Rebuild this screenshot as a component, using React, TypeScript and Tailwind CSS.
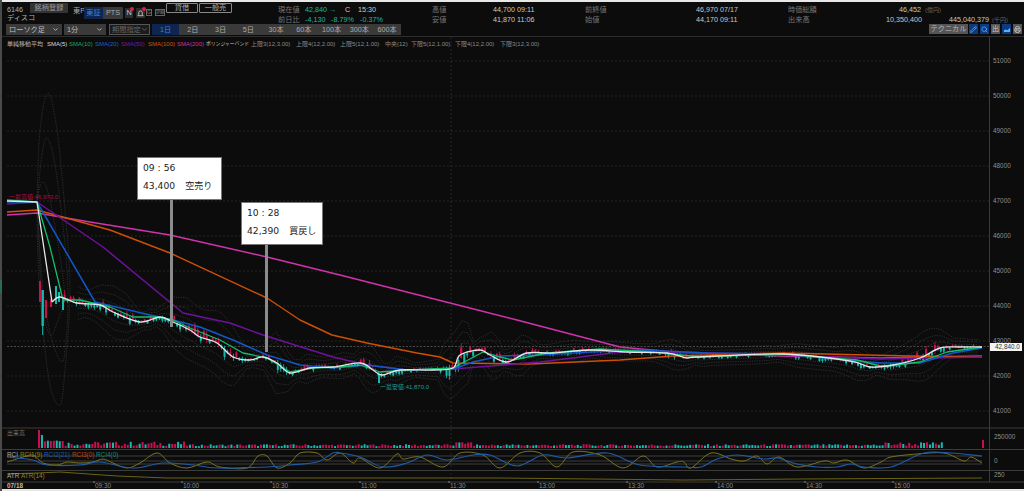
import React from "react";
import { Pencil, Search, Printer, ChevronDown } from "lucide-react";

type P = [number, number];
const white: P[] = [[7,201],[37,202],[52,302],[60,297],[77,303],[100,305],[113,312],[140,322],[160,317],[173,322],[190,330],[200,337],[217,343],[233,357],[250,360],[263,357],[277,363],[290,373],[310,368],[333,367],[360,363],[373,370],[382,375],[400,370],[433,370],[453,368],[460,355],[480,350],[490,355],[507,362],[527,353],[553,353],[590,350],[627,352],[667,353],[687,358],[697,357],[783,354],[850,361],[870,367],[893,365],[920,358],[940,348],[960,347],[982,347]];
const green: P[] = [[7,200],[37,202],[50,247],[63,300],[80,300],[110,307],[133,317],[157,317],[173,320],[190,328],[220,340],[243,353],[267,358],[290,372],[313,368],[340,367],[360,365],[380,372],[407,370],[453,368],[483,352],[500,357],[513,360],[547,353],[600,349],[653,352],[700,357],[783,354],[857,360],[880,366],[897,365],[920,362],[947,352],[982,347]];
const blue: P[] = [[7,202],[37,202],[95,302],[150,315],[173,320],[200,327],[233,340],[267,355],[300,365],[333,368],[367,365],[407,370],[453,369],[473,362],[500,356],[540,355],[590,352],[640,350],[707,353],[783,354],[880,363],[920,363],[953,353],[982,348]];
const purple: P[] = [[7,204],[37,202],[103,247],[183,313],[230,323],[263,335],[333,357],[367,365],[407,370],[453,369],[540,362],[620,352],[707,353],[783,355],[880,359],[982,357]];
const orange: P[] = [[7,212],[37,210],[110,230],[170,253],[267,298],[300,320],[332,335],[367,343],[417,353],[440,357],[453,363],[530,364],[620,360],[673,356],[783,353],[910,356],[982,357]];
const magenta: P[] = [[7,215],[37,213],[90,222],[170,235],[267,257],[340,275],[450,303],[517,320],[620,347],[673,352],[783,356],[880,358],[982,356]];
const rciA: P[] = [[7,462],[20,458],[33,455],[43,463],[57,465],[67,462],[80,463],[93,462],[103,459],[113,463],[127,468],[140,463],[157,453],[170,463],[187,468],[207,462],[220,467],[247,468],[258,456],[267,456],[277,468],[290,463],[300,453],[317,453],[327,460],[340,453],[353,463],[360,458],[380,468],[397,454],[403,459],[420,457],[443,467],[460,453],[483,455],[500,468],[520,453],[540,453],[557,467],[573,452],[600,455],[623,468],[643,456],[657,467],[677,462],[684,462],[691,468],[711,453],[731,459],[744,461],[757,456],[767,464],[779,457],[797,467],[824,461],[834,463],[847,460],[864,468],[881,462],[891,457],[917,454],[944,453],[964,461],[971,457],[982,463]];
const rciB: P[] = [[7,457],[33,460],[47,465],[80,465],[100,462],[133,468],[163,463],[193,465],[217,468],[267,467],[290,465],[317,462],[333,453],[340,453],[360,457],[383,467],[407,463],[427,455],[447,460],[473,455],[490,455],[517,466],[543,455],[567,458],[607,453],[640,465],[684,467],[701,467],[717,459],[737,455],[764,459],[777,458],[797,464],[817,467],[837,467],[851,464],[864,467],[891,467],[924,453],[951,453],[982,456]];
const atr: P[] = [[7,474],[37,473],[60,472],[117,476],[167,478],[340,478],[500,478],[683,480],[800,479],[982,478]];

const pts = (a: P[]) => a.map((p) => p.join(",")).join(" ");
const smooth = (a: P[]) => {
  let d = `M${a[0][0]} ${a[0][1]}`;
  for (let i = 0; i < a.length - 1; i++) {
    const p0 = a[Math.max(i - 1, 0)];
    const p1 = a[i];
    const p2 = a[i + 1];
    const p3 = a[Math.min(i + 2, a.length - 1)];
    d += ` C${p1[0] + (p2[0] - p0[0]) / 6} ${p1[1] + (p2[1] - p0[1]) / 6} ${p2[0] - (p3[0] - p1[0]) / 6} ${p2[1] - (p3[1] - p1[1]) / 6} ${p2[0]} ${p2[1]}`;
  }
  return d;
};
const at = (a: P[], x: number) => {
  for (let i = 1; i < a.length; i++) {
    if (x <= a[i][0]) {
      const [x0, y0] = a[i - 1];
      const [x1, y1] = a[i];
      return y0 + ((y1 - y0) * (x - x0)) / (x1 - x0);
    }
  }
  return a[a.length - 1][1];
};
const rnd = (i: number) => {
  const v = Math.sin(i * 12.9898) * 43758.5453;
  return v - Math.floor(v);
};
const UP = "#c8104e";
const DOWN = "#18b8b0";
const vol = (x: number) => Math.abs(at(white, x - 14) - at(white, x + 14));

const candles = Array.from({ length: 318 }, (_, i) => {
  const x = 40 + i * 2.96;
  const y = at(white, x);
  const v = vol(x);
  const h = 1 + rnd(i) * (1 + v * 0.45);
  const up = rnd(i + 500) > 0.5;
  return { x, y: up ? y - h : y, h, up, wick: 0.4 + rnd(i + 900) * (0.8 + v * 0.2) };
}).filter((c) => c.x > 62);

const bars = Array.from({ length: 306 }, (_, i) => {
  const x = 38 + i * 2.96;
  let h = 1.8 + rnd(i + 70) * 2;
  if (i === 0) h = 18;
  else if (i === 1) h = 13;
  else if (i < 9) h = 6.5 + rnd(i) * 1.5;
  else if (i < 50) h = 2 + rnd(i + 70) * 4.5;
  else if (i > 140 && i < 147) h = 4 + rnd(i) * 2;
  else if (i > 285) h = 2 + rnd(i + 70) * 4;
  return { x, h, up: rnd(i + 300) > 0.5 || i === 0 };
});

const band = (k: number) => {
  const a: string[] = [];
  const b: string[] = [];
  for (let x = 78; x <= 982; x += 6) {
    const d = k * (1 + Math.min(vol(x), 22) * 0.2);
    a.push(`${x},${at(white, x) - d}`);
    b.push(`${x},${at(white, x) + d}`);
  }
  return [a.join(" "), b.join(" ")];
};

const prices = [51000, 50000, 49000, 48000, 47000, 46000, 45000, 44000, 43000, 42000, 41000];
const times: [number, string][] = [[94,"09:30"],[182,"10:00"],[271,"10:30"],[360,"11:00"],[449,"11:30"],[538,"13:00"],[627,"13:30"],[716,"14:00"],[805,"14:30"],[893,"15:00"]];
const ranges = ["2日", "3日", "5日", "30本", "60本", "100本", "300本", "600本"];
const legend: [string, string][] = [
  ["単純移動平均", "w-[40px] text-[#b8b8b8]"],
  ["SMA(5)", "w-[22px] text-[#d8d8d8]"],
  ["SMA(10)", "w-[26px] text-[#10b060]"],
  ["SMA(20)", "w-[26px] text-[#1860d0]"],
  ["SMA(50)", "w-[27px] text-[#7818a8]"],
  ["SMA(100)", "w-[29px] text-[#d05010]"],
  ["SMA(200)", "w-[29px] text-[#c830a0]"],
  ["ボリンジャーバンド", "w-[45px] text-[4.8px] text-[#c8c8c8]"],
  ["上限3(12,3.00)", "w-[45px] text-[#8a8a8a]"],
  ["上限4(12,2.00)", "w-[44px] text-[#8a8a8a]"],
  ["上限5(12,1.00)", "w-[45px] text-[#8a8a8a]"],
  ["中央(12)", "w-[26px] text-[#8a8a8a]"],
  ["下限5(12,1.00)", "w-[44px] text-[#8a8a8a]"],
  ["下限4(12,2.00)", "w-[45px] text-[#8a8a8a]"],
  ["下限3(12,3.00)", "text-[#8a8a8a]"],
];

function Stat({ label, value, time, w, vw }: { label: string; value: string; time?: string; w: string; vw: string }) {
  return (
    <div className={`flex items-center ${w}`}>
      <span className="w-[61px] text-[#777]">{label}</span>
      <span className={`text-right text-[#c8c8c8] ${vw}`}>{value}</span>
      {time && <span className="ml-[2px] text-[#c8c8c8]">{time}</span>}
    </div>
  );
}

function Tag({ time, value, side, box, pole }: { time: string; value: string; side: string; box: string; pole: string }) {
  return (
    <>
      <div className={`absolute flex flex-col justify-center gap-[6px] border border-[#777] bg-white pb-[4px] pl-[5px] font-['DejaVu_Sans','Noto_Sans_CJK_JP',sans-serif] text-[9.2px] leading-[12px] text-[#222] ${box}`}>
        <span>{time}</span>
        <span>
          {value}
          <span className="ml-[10px] text-[9px]">{side}</span>
        </span>
      </div>
      <div className={`absolute w-[3px] bg-[#8c8c8c] ${pole}`} />
    </>
  );
}

export default function App() {
  const [b1u, b1d] = band(2.5);
  const [b2u, b2d] = band(5);
  const [b3u, b3d] = band(7.5);
  return (
    <div className="flex h-[491px] w-[1024px] overflow-hidden whitespace-nowrap bg-[#e8e8e8] font-['Liberation_Sans','Noto_Sans_CJK_JP',sans-serif] text-[7.2px] leading-none">
      <div className="h-full w-[2px] shrink-0 bg-[#4a4a4a] pt-[280px]">
        <div className="h-[13px] w-[2px] bg-[#2a6a58]" />
      </div>
      <div className="mt-[2px] flex h-[487px] w-[1022px] flex-col bg-[#0c0c0c]">
        <div className="flex h-[22px] shrink-0 pl-[5px] pt-[1px]">
          <div className="flex w-[271px] shrink-0">
            <div className="flex h-[21px] w-[23px] shrink-0 flex-col justify-between py-[3px] text-[#b0b0b0]">
              <span>6146</span>
              <span>ディスコ</span>
            </div>
            <div className="flex h-[10px] w-[38px] shrink-0 items-center justify-center rounded-[1px] bg-[#333] text-[#999]">銘柄登録</div>
            <span className="ml-[5px] mt-[4px] w-[11px] shrink-0 text-[#aaa]">東P</span>
            <div className="mt-[4px] flex h-[12px] w-[39px] shrink-0 overflow-hidden rounded-[1px] bg-[#3a3a3a]">
              <span className="flex w-[19px] items-center justify-center bg-[#0d2550] text-[#3a80d8]">東証</span>
              <span className="flex flex-1 items-center justify-center text-[#aaa]">PTS</span>
            </div>
            <div className="relative ml-[2px] mt-[5px] flex h-[10px] w-[8px] shrink-0 items-center justify-center bg-[#2c2c2c] text-[#ccc]">
              N<span className="absolute -right-[1px] -top-[1px] h-[4px] w-[4px] rounded-full bg-[#e02040]" />
            </div>
            <div className="relative ml-[3px] mt-[5px] flex h-[10px] w-[9px] shrink-0 items-center justify-center bg-[#2c2c2c] text-[#ccc]">
              <svg viewBox="0 0 8 8" className="h-[7px] w-[7px]" fill="none" stroke="#ccc" strokeWidth="1"><path d="M1 6.5h6L6 5V3a2 2 0 0 0-4 0v2z" /></svg>
              <span className="absolute -right-[1px] -top-[1px] h-[4px] w-[4px] rounded-full bg-[#e02040]" />
            </div>
            <span className="ml-[1px] mt-[6px] flex h-[7px] w-[6px] shrink-0 items-center justify-center border border-[#666] text-[5px] text-[#888]">G</span>
            <span className="ml-[3px] mt-[6px] flex h-[7px] w-[10px] shrink-0 items-center justify-center border border-[#666] text-[4px] text-[#888]">詳細</span>
            <span className="ml-[1px] flex h-[10px] w-[32px] shrink-0 items-center justify-center rounded-[1px] border border-[#888] text-[#aaa]">貸借</span>
            <span className="ml-[1px] flex h-[10px] w-[33px] shrink-0 items-center justify-center rounded-[1px] border border-[#888] text-[#aaa]">一般売</span>
          </div>
          <div className="flex flex-1 flex-col gap-[2px] pt-[3px]">
            <div className="flex h-[8px] items-center">
              <div className="flex w-[154px] items-center">
                <span className="w-[27px] text-[#777]">現在値</span>
                <span className="w-[40px] text-[#1cb8a8]">42,840 →</span>
                <span className="w-[13px] text-[#ccc]">C</span>
                <span className="text-[#ccc]">15:30</span>
              </div>
              <Stat label="高値" value="44,700" time="09:11" w="w-[153px]" vw="w-[22px]" />
              <Stat label="前終値" value="46,970" time="07/17" w="w-[203px]" vw="w-[72px]" />
              <div className="flex items-center">
                <span className="w-[111px] text-[#777]">時価総額</span>
                <span className="w-[22px] text-right text-[#c8c8c8]">46,452</span>
                <span className="ml-[4px] text-[6px] text-[#666]">(億円)</span>
              </div>
            </div>
            <div className="flex h-[8px] items-center">
              <div className="flex w-[154px] items-center">
                <span className="w-[27px] text-[#777]">前日比</span>
                <span className="w-[26px] text-[#1cb8a8]">-4,130</span>
                <span className="w-[29px] text-[#1cb8a8]">-8.79%</span>
                <span className="text-[#1cb8a8]">-0.37%</span>
              </div>
              <Stat label="安値" value="41,870" time="11:06" w="w-[153px]" vw="w-[22px]" />
              <Stat label="始値" value="44,170" time="09:11" w="w-[203px]" vw="w-[72px]" />
              <div className="flex items-center">
                <span className="w-[98px] text-[#777]">出来高</span>
                <span className="w-[36px] text-right text-[#c8c8c8]">10,350,400</span>
                <span className="ml-[27px] text-[#c8c8c8]">445,040,379</span>
                <span className="ml-[3px] text-[6px] text-[#666]">(千円)</span>
              </div>
            </div>
          </div>
        </div>
        <div className="flex h-[13px] shrink-0 items-start border-b border-[#2e2e2e] pl-[4px]">
          <div className="flex h-[11px] w-[56px] items-center justify-between bg-[#3a3a3a] px-[3px] text-[#bbb]">ローソク足<ChevronDown size={7} strokeWidth={3} className="shrink-0" /></div>
          <div className="ml-[2px] flex h-[11px] w-[42px] items-center justify-between bg-[#3a3a3a] px-[3px] text-[#bbb]">1分<ChevronDown size={7} strokeWidth={3} className="shrink-0" /></div>
          <div className="ml-[3px] flex h-[11px] w-[41px] items-center justify-between border border-[#555] bg-[#1c1c1c] px-[2px] text-[#666]">期間指定<ChevronDown size={7} strokeWidth={3} className="shrink-0" /></div>
          <div className="ml-[2px] flex h-[11px] w-[249px] bg-[#3a3a3a] text-[#aaa]">
            <span className="flex w-[27px] items-center justify-center bg-[#0d2550] text-[#3a80d8]">1日</span>
            {ranges.map((r) => (
              <span key={r} className="flex flex-1 items-center justify-center">{r}</span>
            ))}
          </div>
          <div className="ml-auto mr-[2px] flex h-[10px] items-center gap-[2px]">
            <span className="mr-[-1px] flex h-[10px] w-[39px] items-center justify-center bg-[#555] text-[#bbb]">テクニカル</span>
            <span className="flex h-[10px] w-[9px] items-center justify-center bg-[#0c3a80] text-[#5ab0ff]"><Pencil size={7} strokeWidth={2.5} /></span>
            <span className="flex h-[10px] w-[9px] items-center justify-center bg-[#0c3a80] text-[#5ab0ff]"><Search size={7} strokeWidth={2.5} /></span>
            <span className="flex h-[10px] w-[9px] items-center justify-center bg-[#555] text-[#ccc]">出</span>
            <span className="flex h-[10px] w-[9px] items-center justify-center bg-[#0c3a80]">
              <svg viewBox="0 0 9 9" className="h-[8px] w-[8px]"><path d="M1 8V6l2-1 2 1 3-3v5z" fill="#5ab0ff" /></svg>
            </span>
            <span className="flex h-[10px] w-[9px] items-center justify-center bg-[#555] text-[#ccc]"><Printer size={7} strokeWidth={2.5} /></span>
          </div>
        </div>
        <div className="relative min-h-0 flex-1">
          <div className="absolute left-[5px] top-[3px] flex items-center text-[6px] leading-[8px]">
            {legend.map(([t, c]) => (
              <span key={t} className={`shrink-0 ${c}`}>{t}</span>
            ))}
          </div>
          <svg viewBox="2 37 1022 452" className="block h-[452px] w-[1022px]" fontSize="6.4">
            {prices.map((p, i) => (
              <line key={p} x1="7" x2="989" y1={61 + i * 35} y2={61 + i * 35} stroke="#2b2b2b" strokeWidth="0.8" strokeDasharray="2 2" />
            ))}
            <line x1="451" x2="451" y1="37" y2="482" stroke="#2b2b2b" strokeWidth="0.8" strokeDasharray="2 2" />
            <line x1="7" x2="989" y1="346.5" y2="346.5" stroke="#5a5a5a" strokeWidth="0.8" strokeDasharray="2 1.5" />
            <line x1="989.5" x2="989.5" y1="37" y2="482" stroke="#3a3a3a" />
            {[428, 449.5, 470.5, 482].map((y) => (
              <line key={y} x1="2" x2="1024" y1={y} y2={y} stroke="#3c3c3c" />
            ))}
            {[456, 461, 464].map((y) => (
              <line key={y} x1="7" x2="982" y1={y} y2={y} stroke="#4a4a4a" strokeWidth="0.8" />
            ))}

            <g fill="none" stroke="#363636" strokeWidth="0.8" strokeDasharray="1.2 1.2">
              <path d={smooth([[37,202],[40,130],[48,93],[57,130],[65,210],[70,290],[65,370],[60,405],[50,385],[42,320],[38,260],[37,202]])} />
              <path d={smooth([[37,202],[42,155],[47,138],[55,165],[65,245],[68,300],[66,340],[62,362],[52,340],[43,290],[37,202]])} />
              <path d={smooth([[37,202],[42,182],[50,200],[62,270],[64,300],[58,320],[50,335],[42,300],[37,202]])} />
              {[b1u, b1d, b2u, b2d, b3u, b3d].map((b, i) => (
                <polyline key={i} points={b} />
              ))}
            </g>

            {candles.map((c, i) => (
              <g key={i} fill={c.up ? UP : DOWN}>
                <rect x={c.x + 0.6} y={c.y - c.wick} width="0.8" height={c.h + c.wick * 2} />
                <rect x={c.x} y={c.y} width="2" height={c.h} />
              </g>
            ))}
            <g>
              <rect x="39" y="281" width="2" height="21" fill={UP} />
              <rect x="41.5" y="290" width="2.4" height="36" fill={DOWN} />
              <rect x="42.2" y="326" width="1" height="9" fill={DOWN} />
              <rect x="45" y="300" width="2" height="18" fill={UP} />
              <rect x="50" y="299" width="2" height="8" fill={UP} />
              <rect x="55" y="286" width="2" height="18" fill={DOWN} />
              <rect x="58" y="292" width="2" height="10" fill={DOWN} />
              <rect x="62" y="298" width="2" height="12" fill={DOWN} />
              <rect x="378" y="375" width="2" height="8" fill={DOWN} />
              <rect x="460" y="348" width="2" height="10" fill={UP} />
            </g>
            <g fill="none" strokeLinejoin="round">
              <polyline points={pts(magenta)} stroke="#d233ab" strokeWidth="1.4" />
              <polyline points={pts(orange)} stroke="#cf4f06" strokeWidth="1.4" />
              <polyline points={pts(purple)} stroke="#6f119c" strokeWidth="1.5" />
              <polyline points={pts(blue)} stroke="#1158c8" strokeWidth="1.5" />
              <polyline points={pts(green)} stroke="#12c068" strokeWidth="1.3" />
              <polyline points={pts(white.slice(0, 3))} stroke="#e6e6e6" strokeWidth="1.3" />
              <path d={smooth(white.slice(2))} stroke="#e6e6e6" strokeWidth="1.3" />
            </g>
            <text x="9" y="199" fill="#b01050" fontSize="6">一最高値:46,970.0</text>
            <text x="380" y="389" fill="#18a090" fontSize="6">一最安値:41,870.0</text>

            {bars.map((b, i) => (
              <rect key={i} x={b.x} y={448 - b.h} width="2" height={b.h} fill={b.up ? UP : DOWN} />
            ))}
            <rect x="982" y="440" width="2" height="8" fill={UP} />
            <path d={smooth(rciA)} fill="none" stroke="#7a7420" strokeWidth="1" />
            <path d={smooth(rciB)} fill="none" stroke="#1f5ca8" strokeWidth="1.1" />
            <polyline points={pts(atr)} fill="none" stroke="#6a6412" strokeWidth="1" />

            <text x="7" y="435" fill="#777" fontSize="6">出来高</text>
            <text x="7" y="457" fill="#aaa">RCI</text>
            <text x="20" y="457" fill="#8a8420">RCI1(9)</text>
            <text x="44" y="457" fill="#1f5ca8">RCI2(21)</text>
            <text x="72" y="457" fill="#b04a18">RCI3(0)</text>
            <text x="96" y="457" fill="#108a78">RCI4(0)</text>
            <text x="7" y="478" fill="#aaa">ATR</text>
            <text x="21" y="478" fill="#8a8420">ATR(14)</text>
            <text x="7" y="488" fill="#bbb" fontWeight="700">07/18</text>
            {times.map(([x, t]) => (
              <g key={t}>
                <line x1={x} x2={x} y1="481" y2="483" stroke="#888" />
                <text x={x + 1} y="488" fill="#8a8a8a">{t}</text>
              </g>
            ))}

            {prices.map((p, i) =>
              p === 43000 ? null : (
                <text key={p} x="993" y={63.2 + i * 35} fill="#8f8f8f">{p}</text>
              )
            )}
            <text x="993" y="342.5" fill="#8f8f8f">43000</text>
            <rect x="990" y="343" width="32" height="8" fill="#f4f4f4" />
            <text x="995" y="349.3" fill="#333">42,840.0</text>
            <text x="994" y="439" fill="#8f8f8f">250000</text>
            <text x="994" y="463" fill="#8f8f8f">0</text>
            <text x="994" y="477" fill="#8f8f8f">250</text>
          </svg>
          <Tag time="09 : 56" value="43,400" side="空売り" box="left-[135px] top-[120px] h-[43px] w-[85px]" pole="left-[168px] top-[163px] h-[127px]" />
          <Tag time="10 : 28" value="42,390" side="買戻し" box="left-[239px] top-[165px] h-[43px] w-[82px]" pole="left-[263px] top-[208px] h-[107px]" />
        </div>
      </div>
    </div>
  );
}
